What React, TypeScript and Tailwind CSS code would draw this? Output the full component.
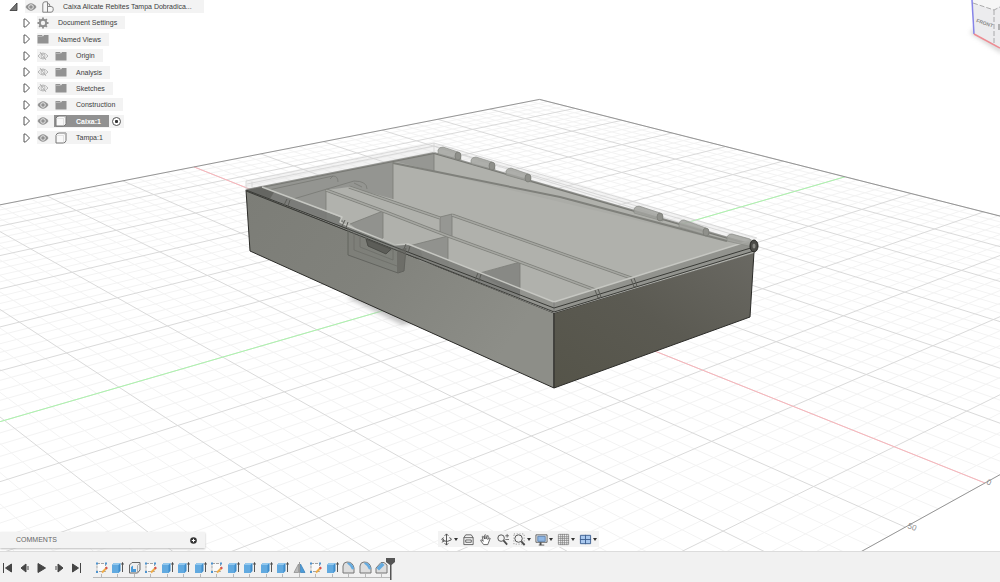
import type React from "react";

type IconProps = { className?: string };

const U_STEPS = 29;
const V_STEPS = 30;

// Perspective projection of the ground plane, u and v both run from -1 to 1
function project(u: number, v: number) {
  const w = 1 - 0.2718 * u + 0.25 * v;
  const x = (482 + 235.3 * u + 574.25 * v) / w;
  const y = (282 + 69.7 * u - 61 * v) / w;
  return `${x.toFixed(1)} ${y.toFixed(1)}`;
}

function segment(u1: number, v1: number, u2: number, v2: number) {
  return `M${project(u1, v1)}L${project(u2, v2)}`;
}

function gridPath(major: boolean) {
  let d = "";
  for (let i = -U_STEPS; i <= U_STEPS; i++) {
    if ((i % 5 === 0) === major) d += segment(i / U_STEPS, -1, i / U_STEPS, 1);
  }
  for (let j = -V_STEPS; j <= V_STEPS; j++) {
    if ((j % 5 === 0) === major) d += segment(-1, j / V_STEPS, 1, j / V_STEPS);
  }
  return d;
}

const minorGrid = gridPath(false);
const majorGrid = gridPath(true);

function Ground() {
  return (
    <g fill="none">
      <path d={minorGrid} stroke="#f3f3f3" />
      <path d={majorGrid} stroke="#dadada" />
      <path d={segment(-1, 0, 1, 0)} stroke="#fbb4ba" />
      <path d={segment(0, -1, 0, 1)} stroke="#acf5ac" />
      <path
        d={`M${project(-1, -1)}L${project(-1, 1)}L${project(1, 1)}L${project(1, -1)}`}
        stroke="#959595"
      />
      <g fill="#8a8a8a" fontFamily="Liberation Sans, sans-serif" fontSize="8">
        <text transform="translate(986 484) rotate(20)">0</text>
        <text transform="translate(907 528) rotate(20)">50</text>
      </g>
    </g>
  );
}

const hinges = [
  [438, 147, 461, 154],
  [471, 157, 495, 164],
  [506, 168, 531, 176],
  [634, 206, 663, 215],
  [679, 220, 709, 230],
  [727, 234, 753, 241],
];

function Box() {
  return (
    <g strokeLinejoin="round">
      <path d="M346 297L402 325L418 322L366 295Z" fill="#aaa" opacity=".7" filter="url(#soft)" />

      {/* outer walls */}
      <path d="M246 190L554 313V388L250 251Z" fill="url(#front)" stroke="#2b2b28" />
      <path d="M554 313L754 252L750 317L554 388Z" fill="url(#side)" stroke="#2b2b28" />

      {/* inside */}
      <path d="M246 190L434 153L756 246L754 253L554 313Z" fill="#b0b1ac" />
      <path d="M246 190L393 161V199L349 187L326 190V219Z" fill="#949591" />
      <path d="M326 190L383 211V238L326 219Z" fill="#b1b2ad" />
      <path d="M350 224L383 211V240L360 232Z" fill="#91928e" />
      <path d="M405 247L448 236V270L420 261Z" fill="#91928e" />
      <path d="M478 274L520 262V296Z" fill="#888985" />
      <path d="M440 217L452 214V237L440 232Z" fill="#969793" />
      <path d="M393 162L434 153V170L756 244L727 242Z" fill="#abaca7" />
      <path d="M393 161L434 153V171Z" fill="#969793" />

      {/* compartment edges */}
      <g fill="none" stroke="#7b7c77" strokeWidth=".8">
        <path d="M326 190V219M383 211V238M448 236V270M520 262V296M393 162V199M434 153V171M452 214V236M440 217V233" />
        <path d="M350 224L383 211M405 247L448 236M480 273L520 262M440 217L452 214" />
      </g>
      <g fill="none" stroke="#7f807b" strokeWidth="3">
        <path d="M326 190L383 211L448 236L520 262L598 291" />
        <path d="M349 187L440 218M452 215L634 279" />
        <path d="M393 163L560 197L727 241" strokeWidth="2" />
      </g>
      <g fill="none" stroke="#a5a6a1" strokeWidth="1.5">
        <path d="M326 190L383 211L448 236L520 262L598 291M349 187L440 218M452 215L634 279" />
      </g>
      <path
        d="M264 191L333 176Q338 176 338 182M290 200L354 181Q367 181 367 189M333 176L330 179M354 183L362 187"
        fill="none"
        stroke="#777873"
        strokeWidth=".8"
      />

      {/* rim seen through the lid */}
      <path d="M246 190L434 153L756 246" fill="none" stroke="#777873" strokeWidth="2" />
      <path d="M246 190L262 187L340 217L347 226L395 245L407 244L554 302V312Z" fill="#777874" opacity=".85" />
      <path d="M246 190L262 186L274 192L270 199Z" fill="#5c5d58" opacity=".7" />
      <path d="M520 289L554 302V311L520 298Z" fill="#989994" opacity=".8" />
      <path d="M420 249L478 272L474 280L424 260Z" fill="#868782" opacity=".6" />
      <path d="M554 302L752 240L756 246L754 251L554 312Z" fill="#92938e" />
      <path d="M262 187L342 217L340 222L348 226L395 245L408 244L554 302L752 240" fill="none" stroke="#c6c7c2" strokeWidth="1.5" />
      <path d="M554 302V312" stroke="#777" strokeWidth=".7" />
      <path
        d="M246 190L554 308L754 247M246 191L554 312L754 251"
        fill="none"
        stroke="#3a3b37"
      />
      <path
        d="M284 205L287 199M288 206L290 200M342 226L345 220M346 228L348 222M403 251L406 244M408 253L410 246M475 280L478 273M479 281L481 274M595 290L598 298L601 297L598 289M631 279L634 287L637 286L634 278"
        fill="none"
        stroke="#5b5c57"
      />

      {/* latch */}
      <path d="M348 228V255L398 273L404 271L406 248" fill="#777874" fillOpacity=".18" stroke="#63645f" />
      <path d="M397 250L406 248L404 271L397 273Z" fill="#60615c" opacity=".6" />
      <path d="M354 233V250L397 266M366 237L368 246L386 253L393 249V260L360 247V235" fill="none" stroke="#6c6d68" strokeWidth=".8" />
      <path d="M366 239L391 249L386 254L368 246Z" fill="#5c5d58" stroke="#454641" strokeWidth=".8" />

      {/* transparent lid */}
      <path d="M246 181L434 143L756 238V246L434 153L246 190Z" fill="#d8d8d8" opacity=".3" />
      <path
        d="M246 190V181L434 143L757 238M247 184L434 146L755 241M434 143V153M252 187V182"
        fill="none"
        stroke="#d2d2d2"
        strokeWidth=".8"
      />
      <g>
        {hinges.map(([x1, y1, x2, y2]) => (
          <path
            key={x1}
            d={`M${x1} ${y1 + 7}V${y1 + 3}Q${x1 + 1} ${y1} ${x1 + 5} ${y1}L${x2 - 3} ${y2 - 2}Q${x2} ${y2} ${x2} ${y2 + 6}Z`}
            fill="#a1a29e"
            fillOpacity=".85"
            stroke="#858681"
            strokeWidth=".6"
          />
        ))}
        {hinges.slice(0, 5).map(([x1, , x2, y2]) => (
          <ellipse key={x1} cx={x2 - 3} cy={y2 + 2} rx="3" ry="4" fill="#8f908b" stroke="#777873" strokeWidth=".7" />
        ))}
      </g>
      <ellipse cx="754" cy="246" rx="4" ry="6" fill="#4b4b47" stroke="#252522" />
      <ellipse cx="754" cy="246" rx="1.5" ry="2.5" fill="#8a8a85" />
    </g>
  );
}

function ViewCube() {
  return (
    <g>
      <path d="M970 33L1002 54V48L974 28Z" fill="#bbb" opacity=".6" filter="url(#soft)" />
      <path d="M972 0L1000 0V48L994 44L974 34Z" fill="#ececee" />
      <path d="M972 0H1000V6L994 10L972 3Z" fill="#f6f6f6" />
      <path d="M973 3L994 10L1000 7M994 10V44" fill="none" stroke="#999" strokeWidth=".8" strokeDasharray="5 2" />
      <path d="M972 0L974 34" stroke="#8684e8" strokeWidth="1.5" />
      <path d="M974 34L1000 48" stroke="#ee8b92" strokeWidth="1.5" />
      <text
        transform="translate(976 22) rotate(19)"
        fill="#8a8a8a"
        fontFamily="Liberation Sans, sans-serif"
        fontSize="5"
        fontWeight="bold"
      >
        FRONT
      </text>
      <path d="M999 24V30" stroke="#777" />
    </g>
  );
}

function Viewport() {
  return (
    <svg
      viewBox="0 0 1000 551"
      preserveAspectRatio="xMidYMid slice"
      className="absolute inset-0 h-full w-full"
      role="img"
      aria-label="Model viewport"
    >
      <defs>
        <linearGradient id="front" x1="0" y1="0" x2="1" y2=".45">
          <stop offset="0" stopColor="#7c7d77" />
          <stop offset=".5" stopColor="#81827c" />
          <stop offset="1" stopColor="#8d8e88" />
        </linearGradient>
        <linearGradient id="side" x1="0" y1="1" x2="1" y2="0">
          <stop offset="0" stopColor="#555449" />
          <stop offset=".5" stopColor="#5b5a52" />
          <stop offset="1" stopColor="#6a6963" />
        </linearGradient>
        <filter id="soft">
          <feGaussianBlur stdDeviation="2" />
        </filter>
      </defs>
      <Ground />
      <Box />
      <ViewCube />
    </svg>
  );
}

function EyeIcon({ off }: { off?: boolean }) {
  return (
    <svg viewBox="0 0 12 10" className="h-[10px] w-3 shrink-0">
      {off ? (
        <g fill="none" stroke="#a8a8a8" strokeWidth=".8">
          <path d="M1 5Q6 -1 11 5Q6 11 1 5Z" />
          <circle cx="6" cy="5" r="2" />
          <path d="M3 1L9 9" />
        </g>
      ) : (
        <g>
          <path d="M.5 5Q6 -2.5 11.5 5Q6 12.5 .5 5Z" fill="#929292" />
          <circle cx="6" cy="5" r="2.3" fill="#929292" stroke="#eee" strokeWidth=".9" />
        </g>
      )}
    </svg>
  );
}

function GearIcon() {
  return (
    <svg viewBox="0 0 12 12" className="h-3 w-3 shrink-0" fill="none" stroke="#8f8f8f">
      <circle cx="6" cy="6" r="3.2" strokeWidth="2" />
      <path d="M6 .5V2.5M6 9.5V11.5M.5 6H2.5M9.5 6H11.5M2.1 2.1L3.5 3.5M8.5 8.5L9.9 9.9M2.1 9.9L3.5 8.5M8.5 3.5L9.9 2.1" strokeWidth="1.8" />
    </svg>
  );
}

function FolderIcon() {
  return (
    <svg viewBox="0 0 12 10" className="h-[10px] w-3 shrink-0">
      <path d="M.5 1H5L6 2.5L7 1H11.5V9.5H.5Z" fill="#929292" />
      <path d="M.5 2.5H5.5" stroke="#c4c4c4" strokeWidth=".7" />
    </svg>
  );
}

function BodyIcon() {
  return (
    <svg viewBox="0 0 12 12" className="h-3 w-3 shrink-0">
      <path d="M1 3.5Q1.5 1 4 1H11V8.5Q10.5 11 8 11H1Z" fill="#f8f8f8" stroke="#777" />
      <path d="M1.5 3.5H8.5V10.5M8.5 3.5L10.5 1.5" fill="none" stroke="#dcdcdc" strokeWidth=".8" />
    </svg>
  );
}

function AssemblyIcon() {
  return (
    <svg viewBox="0 0 12 12" className="h-3 w-3 shrink-0">
      <path
        d="M.8 3Q1 .8 3 .8H5.500V5.500H9Q11.200 5.500 11.200 7.500V9Q11 11.200 9 11.200H.8ZM5.500 5.500V11M5.500 2.500Q8 2 8 5.500"
        fill="#f6f6f6"
        stroke="#777"
        strokeWidth=".9"
      />
    </svg>
  );
}

const treeItems = [
  { name: "Document Settings", icon: "gear" },
  { name: "Named Views", icon: "folder" },
  { name: "Origin", icon: "folder", eye: "off" },
  { name: "Analysis", icon: "folder", eye: "off" },
  { name: "Sketches", icon: "folder", eye: "off" },
  { name: "Construction", icon: "folder", eye: "on" },
  { name: "Caixa:1", icon: "body", eye: "on", active: true },
  { name: "Tampa:1", icon: "body", eye: "on" },
];

function TreeRow({ item }: { item: (typeof treeItems)[number] }) {
  return (
    <li className="flex h-[13px] items-center pl-[23px]">
      <button aria-label={`Expand ${item.name}`} className="mr-[6px] shrink-0">
        <svg viewBox="0 0 8 10" className="h-[10px] w-2">
          <path d="M1 1H2.5L6.5 5L2.5 9H1Z" fill="#fff" stroke="#555" />
        </svg>
      </button>
      <div className="flex h-[13px] items-center bg-[#f3f3f3]">
        {item.eye && (
          <button aria-label={`Toggle ${item.name}`} className="mr-[5px]">
            <EyeIcon off={item.eye === "off"} />
          </button>
        )}
        <div
          className={
            item.active
              ? "flex h-3 w-[55px] items-center gap-[9px] bg-[#919191] pl-px font-bold text-white"
              : item.eye
                ? "flex items-center gap-[9px] pr-2 pl-px"
                : "flex items-center gap-[9px] pr-2"
          }
        >
          {item.icon === "gear" && <GearIcon />}
          {item.icon === "folder" && <FolderIcon />}
          {item.icon === "body" && <BodyIcon />}
          <span>{item.name}</span>
        </div>
        {item.active && (
          <input
            type="radio"
            defaultChecked
            aria-label={`Activate ${item.name}`}
            className="mx-[3px] h-[9px] w-[9px] appearance-none rounded-full border border-[#555] bg-[radial-gradient(circle,#333_25%,#fff_40%)]"
          />
        )}
      </div>
    </li>
  );
}

function Browser() {
  return (
    <ul className="absolute top-0 left-0 flex h-36 flex-col justify-between text-[7px] leading-[13px] whitespace-nowrap text-[#3c3c3c]">
      <li className="flex h-[13px] items-center pl-[9px]">
        <button aria-label="Collapse document" className="mr-[7px]">
          <svg viewBox="0 0 9 9" className="h-[9px] w-[9px]">
            <path d="M1 8.5L8 1V8.5Z" fill="#777" stroke="#333" strokeWidth=".8" />
          </svg>
        </button>
        <div className="flex h-[13px] items-center gap-[5px] bg-[#f3f3f3] pr-3">
          <button aria-label="Toggle document">
            <EyeIcon />
          </button>
          <AssemblyIcon />
          <span className="pl-1">Caixa Alicate Rebites Tampa Dobradica...</span>
        </div>
      </li>
      {treeItems.map((item) => (
        <TreeRow key={item.name} item={item} />
      ))}
    </ul>
  );
}

function NavTool({
  label,
  menu,
  children,
}: {
  label: string;
  menu?: boolean;
  children: React.ReactNode;
}) {
  return (
    <button aria-label={label} className="flex items-center gap-px">
      <svg viewBox="0 0 14 14" className="h-[13px] w-[13px]" fill="none" stroke="#4d4d4d">
        {children}
      </svg>
      {menu && (
        <svg viewBox="0 0 4 3" className="h-[3px] w-1">
          <path d="M0 0H4L2 3Z" fill="#333" />
        </svg>
      )}
    </button>
  );
}

function NavBar() {
  return (
    <div className="absolute inset-x-0 bottom-1 flex justify-center pl-9">
      <div className="flex h-4 items-center bg-[#f3f3f3] px-[2px]">
        <div className="flex items-center gap-1">
          <NavTool label="Orbit" menu>
            <path d="M7 1V13M5 3L7 1L9 3M5 11L7 13L9 11M4 5Q0 7 4 8.5Q8 10 12 7.5M10 5Q13 6 12 7.5M2 10L4.5 8.5L3 6" />
          </NavTool>
          <NavTool label="Look At">
            <path d="M2 5H12V12.5H2ZM2 5L4 2H10L12 5M4 7.5H10V10H4Z" strokeWidth=".9" />
          </NavTool>
          <NavTool label="Pan">
            <path
              d="M5 12.5L2 8.5Q1.5 7 3 7.5L4.5 9L3.5 4Q4 2.5 5 4L6 6.5V2.5Q7 1 7.5 2.5V6.5L9 3Q10 2 10 4L9.5 7L11 5.5Q12 5 12 6L10 11L9.5 12.5Z"
              fill="#fff"
              strokeWidth=".9"
            />
          </NavTool>
          <NavTool label="Zoom">
            <circle cx="5.5" cy="5.5" r="3.5" />
            <path d="M8 8L12 12.5" strokeWidth="2" />
            <path d="M10 3H14M12 1V5M10 7H14" strokeWidth=".8" />
          </NavTool>
          <NavTool label="Fit" menu>
            <path d="M1 1H12V12H1Z" strokeDasharray="1 2" strokeWidth=".7" />
            <circle cx="6" cy="6" r="4" fill="#f3f3f3" />
            <path d="M9 9L12.5 13" strokeWidth="2" />
          </NavTool>
          <NavTool label="Display Settings" menu>
            <path d="M1 2H13V10H1ZM4 13H10" strokeWidth=".9" />
            <path d="M3 3.5H11V9H3Z" fill="#8eb6e4" stroke="#5d80aa" />
            <path d="M6 10V13" strokeWidth="2" />
          </NavTool>
          <NavTool label="Grid and Snaps" menu>
            <path
              d="M1.5 1.5H12.5V12.5H1.5ZM4 1V13M6 1V13M8 1V13M10.5 1V13M1 4H13M1 6H13M1 8H13M1 10.5H13"
              stroke="#777"
              strokeWidth=".7"
            />
          </NavTool>
          <NavTool label="Viewports" menu>
            <path d="M1.5 2.5H12.5V11.5H1.5ZM7 2V12M1 7H13" fill="#a9c8ee" stroke="#3d5f91" />
          </NavTool>
        </div>
      </div>
    </div>
  );
}

function Comments() {
  return (
    <div className="absolute bottom-[3px] left-0 flex h-4 w-[205px] items-center justify-between bg-[#f3f3f3] pr-2 pl-4 text-[7px] text-[#666] shadow-[0_1px_2px_#bbb]">
      <span>COMMENTS</span>
      <button aria-label="Add comment">
        <svg viewBox="0 0 7 7" className="h-[7px] w-[7px]">
          <circle cx="3.5" cy="3.5" r="3.3" fill="#333" />
          <path d="M3.5 1.8V5.2M1.8 3.5H5.2" stroke="#fff" />
        </svg>
      </button>
    </div>
  );
}

function SketchFeature({ className }: IconProps) {
  return (
    <svg viewBox="0 0 13 13" className={className}>
      <path d="M2 2.5H10.5V10.5H2Z" fill="#fafafa" stroke="#8d8d8d" strokeWidth=".8" strokeDasharray="3 1" />
      <path d="M1 1.5H3V3.5H1ZM10 1.5H12V3.5H10ZM1 10H3V12H1Z" fill="#4e94cf" />
      <path d="M7 11.5L11.5 7" stroke="#efad49" strokeWidth="2" />
      <path d="M10.8 7.7L12.2 6.3" stroke="#d85050" strokeWidth="2" />
    </svg>
  );
}

function ExtrudeFeature({ className }: IconProps) {
  return (
    <svg viewBox="0 0 13 13" className={className}>
      <path d="M1 4L3 2H9.5V10L7.5 12H1Z" fill="#3e8dcc" />
      <path d="M1 4H7.5V12H1Z" fill="#62aae0" />
      <path d="M1 4L3 2H9.5L7.5 4Z" fill="#93c8ee" />
      <path d="M11.5 11V2M10.5 3.5L11.5 1.5L12.5 3.5" fill="none" stroke="#444" strokeWidth=".9" />
    </svg>
  );
}

function ShellFeature({ className }: IconProps) {
  return (
    <svg viewBox="0 0 13 13" className={className}>
      <path d="M1.5 4L4 1.5H12V9L9.5 12H1.5Z" fill="#eee" stroke="#666" />
      <path d="M3 6L5 4.5V8H8V11H3Z" fill="#4b9bd9" />
      <path d="M9.5 12V4.5L12 2" fill="none" stroke="#999" strokeWidth=".8" />
    </svg>
  );
}

function MirrorFeature({ className }: IconProps) {
  return (
    <svg viewBox="0 0 13 13" className={className}>
      <path d="M5.5 3V11.5H1Z" fill="#bbb" stroke="#888" strokeWidth=".7" />
      <path d="M7.5 3V11.5H12Z" fill="#4b9bd9" stroke="#347bb4" strokeWidth=".7" />
      <path d="M6.5 1V12.5" stroke="#777" strokeWidth=".7" />
    </svg>
  );
}

function FilletFeature({ className }: IconProps) {
  return (
    <svg viewBox="0 0 13 13" className={className}>
      <path d="M1 12V5Q1.5 1 5 1Q11 1 12 7V12Z" fill="#dedede" stroke="#777" />
      <path d="M6 1.5Q11 2 12 8L10 8.5Q9 5 5 2.5Z" fill="#65abe0" />
    </svg>
  );
}

function ChamferFeature({ className }: IconProps) {
  return (
    <svg viewBox="0 0 13 13" className={className}>
      <path d="M1 12V7L6 1.5H9L12 4V12Z" fill="#dedede" stroke="#777" />
      <path d="M1.5 7L7 1.5L9.5 4L4 9.5Z" fill="#65abe0" />
    </svg>
  );
}

const features = {
  Sketch: SketchFeature,
  Extrude: ExtrudeFeature,
  Shell: ShellFeature,
  Mirror: MirrorFeature,
  Fillet: FilletFeature,
  Chamfer: ChamferFeature,
};

const history: (keyof typeof features)[] = [
  "Sketch", "Extrude", "Shell", "Sketch", "Extrude", "Extrude",
  "Extrude", "Sketch", "Extrude", "Extrude", "Extrude", "Extrude",
  "Mirror", "Sketch", "Extrude", "Fillet", "Fillet", "Chamfer",
];

const playback = [
  { label: "Go to start", d: "M2.5 2V12M10.5 3V11L4.5 7Z" },
  { label: "Step back", d: "M8 3V11L3 7ZM10 5V9" },
  { label: "Play", d: "M3 2.5V11.5L10.5 7Z" },
  { label: "Step forward", d: "M6 3V11L11 7ZM4 5V9" },
  { label: "Go to end", d: "M11.5 2V12M3.5 3V11L9.5 7Z" },
];

function Timeline() {
  return (
    <footer className="flex h-[31px] shrink-0 items-start border-t border-[#dcdcdc] bg-[#f1f1f1] pl-px">
      <div className="flex gap-[3px] pt-[9px]">
        {playback.map(({ label, d }) => (
          <button key={label} aria-label={label}>
            <svg viewBox="0 0 14 14" className="h-[14px] w-[14px]">
              <path d={d} fill="#454545" stroke="#454545" strokeWidth="1" />
            </svg>
          </button>
        ))}
      </div>
      <ol className="ml-[10px] grid w-[297px] grid-cols-18 pt-[9px]">
        {history.map((name, i) => {
          const Icon = features[name];
          return (
            <li key={i} className="flex flex-col items-center border-b border-[#b9b9b9]">
              <button aria-label={name}>
                <Icon className="h-[13px] w-[13px]" />
              </button>
              <span className="h-[3px] w-px bg-[#b9b9b9]" />
            </li>
          );
        })}
      </ol>
      <button aria-label="Timeline marker" className="-ml-1 pt-[6px]">
        <svg viewBox="0 0 9 22" className="h-[22px] w-[9px]">
          <path d="M0 0H9V4L5.500 7V22H4V7L0 4Z" fill="#555" />
        </svg>
      </button>
    </footer>
  );
}

export default function App() {
  return (
    <div className="flex h-screen flex-col overflow-hidden bg-white font-['Liberation_Sans',Arial,sans-serif]">
      <main className="relative min-h-0 flex-1 overflow-hidden">
        <Viewport />
        <Browser />
        <Comments />
        <NavBar />
      </main>
      <Timeline />
    </div>
  );
}
